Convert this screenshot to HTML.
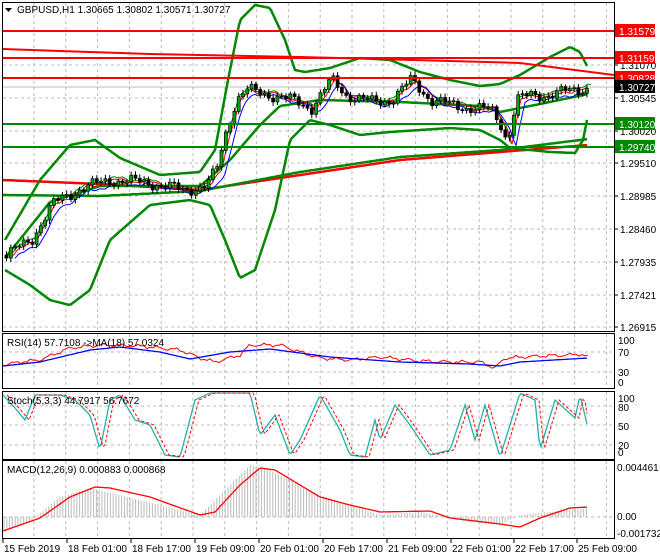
<!DOCTYPE html>
<html><head><meta charset="utf-8"><style>
body{margin:0;background:#fff;width:660px;height:560px;overflow:hidden;font-family:"Liberation Sans",sans-serif}
svg{display:block}
text{font-family:"Liberation Sans",sans-serif;font-size:10px}
</style></head><body>
<svg id="s" width="660" height="560" xmlns="http://www.w3.org/2000/svg"></svg>
<script>
const S=document.getElementById('s');let h='';
function L(a){h+=a;}
function interp(p,x){for(let i=0;i<p.length-1;i++){if(x<=p[i+1][0]){const t=(x-p[i][0])/(p[i+1][0]-p[i][0]);return p[i][1]+t*(p[i+1][1]-p[i][1]);}}return p[p.length-1][1];}
function poly(p,c,w,extra){let d='';for(let x=p[0][0];x<=p[p.length-1][0];x+=2){d+=(d?'L':'M')+x+' '+interp(p,x).toFixed(1);}L(`<path d="${d}" fill="none" stroke="${c}" stroke-width="${w}" ${extra||''}/>`);}
function noisy(p,c,w,amp,f,extra,x0,x1){let d='';x0=x0||p[0][0];x1=x1||p[p.length-1][0];for(let x=x0;x<=x1;x+=3){let y=interp(p,x)+amp*(Math.sin(x*f)+0.6*Math.sin(x*f*2.7+1));d+=(d?'L':'M')+x+' '+y.toFixed(1);}L(`<path d="${d}" fill="none" stroke="${c}" stroke-width="${w}" ${extra||''}/>`);}
const R=614;
[[2,331],[333,388],[391,459],[460,538]].forEach(([a,b])=>L(`<rect x="2.5" y="${a+.5}" width="${R-2}" height="${b-a}" fill="none" stroke="#000"/>`));
for(let x=34;x<R;x+=31.8){L(`<line x1="${x}" y1="3" x2="${x}" y2="331" stroke="#bbb" stroke-dasharray="3,3"/>`);[[334,388],[392,459],[461,538]].forEach(([a,b])=>L(`<line x1="${x}" y1="${a}" x2="${x}" y2="${b}" stroke="#bbb" stroke-dasharray="3,3"/>`));}
const pl=[['1.31070',65],['1.30545',98],['1.30020',131],['1.29510',163],['1.28985',196],['1.28460',229],['1.27935',262],['1.27421',295],['1.26915',327]];
pl.forEach(([t,y])=>{L(`<line x1="3" y1="${y}" x2="${R}" y2="${y}" stroke="#bbb" stroke-dasharray="3,3"/><line x1="${R}" y1="${y}" x2="${R+4}" y2="${y}" stroke="#000"/><text x="${R+6}" y="${y+4}">${t}</text>`);});
[352,372].forEach(y=>L(`<line x1="3" y1="${y}" x2="${R}" y2="${y}" stroke="#bbb" stroke-dasharray="3,3"/>`));
[406,425,445].forEach(y=>L(`<line x1="3" y1="${y}" x2="${R}" y2="${y}" stroke="#bbb" stroke-dasharray="3,3"/>`));
L(`<line x1="3" y1="517" x2="${R}" y2="517" stroke="#bbb" stroke-dasharray="3,3"/>`);
L(`<line x1="3" y1="87" x2="${R}" y2="87" stroke="#bbb"/>`);
poly([[3,180],[100,184],[200,190],[300,175],[400,160],[500,152],[588,145]],'#f00',2.5);
poly([[3,195],[100,196],[200,191],[300,172],[400,157],[500,150],[588,139]],'#080',2.5);
const up=[[5,240],[40,180],[70,145],[95,140],[120,158],[160,175],[200,172],[215,150],[228,80],[240,20],[255,5],[270,8],[285,40],[295,70],[305,72],[330,68],[360,58],[390,60],[420,72],[450,80],[480,86],[500,84],[520,75],[550,57],[570,47],[580,52],[588,68]];
const lo=[[5,270],[30,285],[50,300],[70,305],[90,290],[110,240],[150,205],[190,200],[210,205],[225,240],[240,278],[255,270],[275,210],[290,140],[310,120],[330,125],[360,135],[390,132],[420,130],[450,128],[480,130],[500,140],[510,148],[550,152],[575,153],[583,140],[588,115]];
const mid=[[5,258],[50,202],[100,186],[200,186],[230,160],[260,125],[280,106],[320,100],[400,102],[480,106],[500,112],[540,104],[588,94]];
poly(up,'#080',2.5);poly(lo,'#080',2.5);poly(mid,'#080',2.5);
const pr=[[5,255],[30,240],[50,205],[80,188],[110,180],[150,183],[180,190],[205,186],[215,170],[225,130],[235,100],[245,90],[270,95],[290,100],[310,108],[330,80],[345,95],[370,102],[390,100],[410,80],[430,100],[450,105],[470,108],[490,110],[500,125],[506,142],[515,100],[530,95],[550,95],[570,90],[588,88]];
const fast=pr.map(([x,y])=>[x+6,y]);const slow=pr.map(([x,y])=>[x+10,y+3]);
noisy(pr.map(([x,y])=>[x+4,y-2]),'#080',1,1.5,.2);
noisy(fast,'#f00',1,1.5,.2,'',11,588);noisy(slow,'#00f',1,1.5,.2,'',15,588);
let prev=interp(pr,5);
for(let x=5;x<=588;x+=4.3){let c=interp(pr,x)+4*Math.sin(x*1.3)+3*Math.sin(x*.47);let o=prev;let hi=Math.min(o,c)-2-2*Math.abs(Math.sin(x*2.1));let lw=Math.max(o,c)+2+2*Math.abs(Math.cos(x*1.7));
L(`<line x1="${x+1.5}" y1="${hi}" x2="${x+1.5}" y2="${lw}" stroke="#000"/><rect x="${x}" y="${Math.min(o,c)}" width="3" height="${Math.max(1,Math.abs(c-o))}" fill="${c<o?'#0a0':'#000'}" stroke="#000" stroke-width=".7"/>`);prev=c;}
L(`<line x1="3" y1="31" x2="${R}" y2="31" stroke="#f00" stroke-width="2"/>`);
L(`<path d="M3 49L60 51L150 54L300 57L450 61L520 63L${R} 75" stroke="#f00" stroke-width="2" fill="none"/>`);
L(`<line x1="3" y1="58" x2="${R}" y2="58" stroke="#f00" stroke-width="2"/>`);
L(`<line x1="3" y1="78" x2="${R}" y2="78" stroke="#f00" stroke-width="2"/>`);
L(`<line x1="3" y1="124" x2="${R}" y2="124" stroke="#080" stroke-width="2"/>`);
L(`<line x1="3" y1="147" x2="${R}" y2="147" stroke="#080" stroke-width="2"/>`);
[['1.31579',31,'#f00'],['1.31159',58,'#f00'],['1.30828',78,'#f00'],['1.30727',87,'#000'],['1.30120',124,'#080'],['1.29740',147,'#080']].forEach(([t,y,c])=>L(`<rect x="${R+1}" y="${y-7}" width="40" height="13" fill="${c}"/><text x="${R+5}" y="${y+4}" fill="#fff">${t}</text>`));
L(`<path d="M5 8h7l-3.5 4z" fill="#000"/><text x="17" y="13">GBPUSD,H1  1.30665 1.30802 1.30571 1.30727</text>`);
const rs=[[3,365],[20,362],[40,360],[70,348],[100,345],[140,346],[180,350],[200,358],[215,362],[240,355],[250,345],[280,345],[300,352],[320,358],[350,360],[380,357],[420,361],[450,362],[480,362],[495,368],[505,358],[540,356],[570,355],[580,354],[588,357]];
noisy(rs,'#f00',1,1.3,.35,'',3,588);
poly([[3,366],[40,362],[90,350],[120,347],[160,352],[190,359],[230,352],[270,349],[330,357],[400,362],[470,364],[500,366],[520,362],[588,358]],'#00f',1.3);
L(`<text x="7" y="346">RSI(14) 57.7108  -&gt;MA(18) 57.0324</text>`);
[['100',344],['70',356],['30',376],['0',386]].forEach(([t,y])=>L(`<text x="${R+4}" y="${y}">${t}</text>`));
const st=[[3,395],[15,408],[25,420],[35,395],[60,395],[75,400],[90,415],[100,450],[110,400],[120,395],[135,420],[150,425],[165,455],[180,457],[195,400],[210,393],[250,393],[260,435],[275,415],[290,455],[300,440],[320,395],[340,430],[350,455],[365,457],[375,420],[380,440],[395,405],[410,425],[430,455],[450,450],[465,405],[475,440],[485,405],[500,457],[520,393],[535,400],[540,450],[555,400],[575,418],[580,395],[588,428]];
poly(st,'#20b2aa',1.3);
poly(st.map(([x,y])=>[x+4,y]).slice(0,-1).concat([[588,420]]),'#f00',1,'stroke-dasharray="3,2"');
L(`<text x="7" y="404">Stoch(5,3,3) 44.7917 56.7672</text>`);
[['100',402],['80',411],['50',430],['20',449],['0',456]].forEach(([t,y])=>L(`<text x="${R+4}" y="${y}">${t}</text>`));
const mh=[[3,530],[30,522],[60,497],[90,488],[140,500],[200,515],[250,465],[265,468],[320,495],[380,515],[420,512],[470,522],[500,525],[520,515],[588,508]];
for(let x=4;x<=588;x+=2.8){let y=interp(mh,x);L(`<line x1="${x}" y1="517" x2="${x}" y2="${y}" stroke="#bbb"/>`);}
poly([[3,531],[40,518],[70,497],[95,487],[110,488],[150,497],[200,515],[215,512],[240,485],[260,468],[275,470],[320,497],[350,505],[380,512],[430,511],[450,518],[500,524],[520,527],[540,518],[570,508],[588,507]],'#f00',1.3);
L(`<text x="7" y="473">MACD(12,26,9) 0.000883 0.000868</text>`);
[['0.004461',471],['0.00',520],['-0.001732',537]].forEach(([t,y])=>L(`<text x="${R+3}" y="${y}">${t}</text>`));
[['15 Feb 2019',2],['18 Feb 01:00',66],['18 Feb 17:00',130],['19 Feb 09:00',194],['20 Feb 01:00',258],['20 Feb 17:00',322],['21 Feb 09:00',386],['22 Feb 01:00',450],['22 Feb 17:00',513],['25 Feb 09:00',576]].forEach(([t,x])=>L(`<line x1="${x+1}" y1="538" x2="${x+1}" y2="543" stroke="#000"/><text x="${x+2}" y="552">${t}</text>`));
S.innerHTML=h;
</script>
</body></html>
